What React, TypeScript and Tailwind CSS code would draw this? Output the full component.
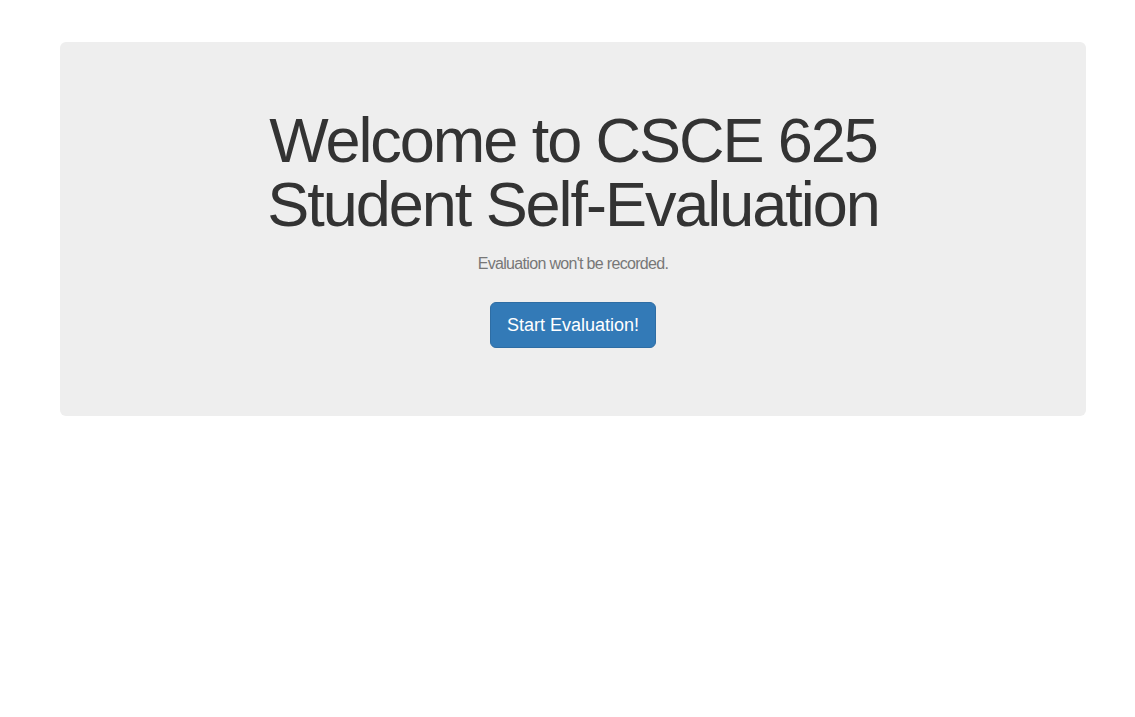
export default function App() {
  return (
    <div className="min-h-screen bg-white pt-[42px]" style={{ fontFamily: '"Liberation Sans", Arial, sans-serif' }}>
      <div className="ml-[60px] w-[1026px] rounded-[6px] bg-[#eeeeee] pt-[66px] pb-[68px] flex flex-col items-center text-center">
        <h1 className="text-[63px] leading-[64px] tracking-[-2.05px] text-[#333333] font-normal">
          Welcome to CSCE 625
          <br />
          Student Self-Evaluation
        </h1>
        <p className="mt-[17px] text-[16px] leading-[22px] tracking-[-0.68px] text-[#777777]">
          Evaluation won't be recorded.
        </p>
        <button className="mt-[27px] h-[46px] px-[16px] rounded-[6px] border border-[#2e6da4] bg-[#337ab7] text-white text-[18px] leading-[24px]">
          Start Evaluation!
        </button>
      </div>
    </div>
  );
}
